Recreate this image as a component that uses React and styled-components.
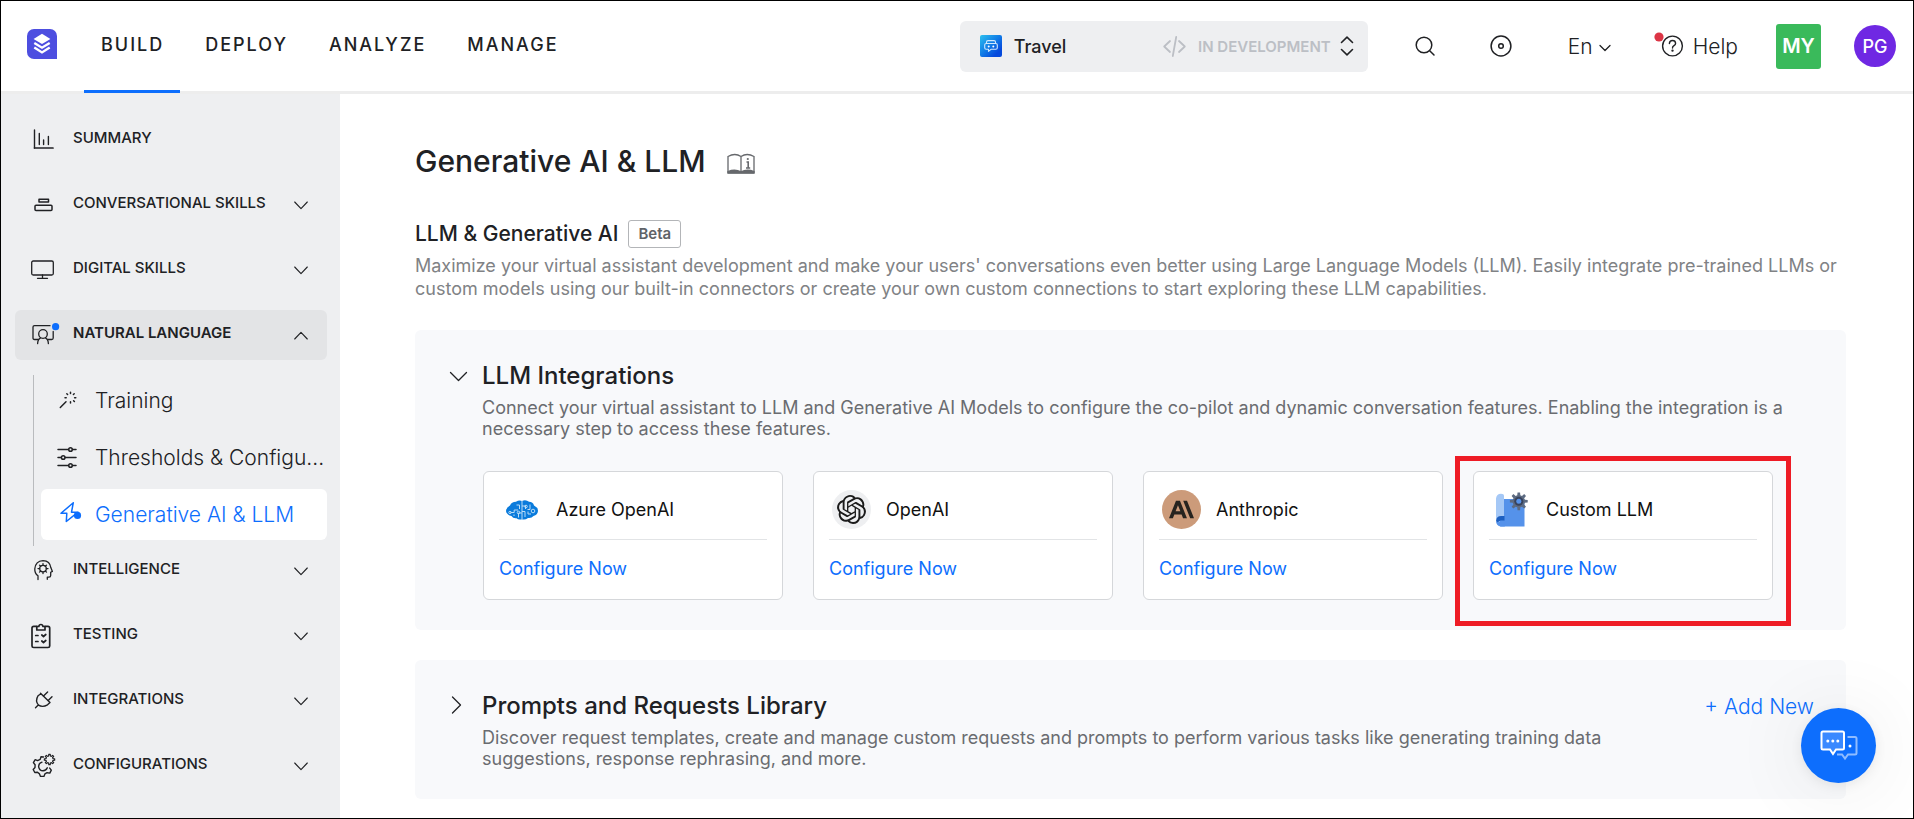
import React from 'react';
import styled, { createGlobalStyle, css } from 'styled-components';
import { SiOpenai, SiAnthropic } from 'react-icons/si';

const ink = '#202124';
const blue = '#0d6efd';
const shade = '#eeeff1';

const GlobalStyle = createGlobalStyle`
  *, *::before, *::after { box-sizing: border-box; }
  body {
    margin: 0;
    background: #fff;
    color: ${ink};
    font-family: Inter, "Liberation Sans", sans-serif;
  }
  h1, h2, h3, p, ul { margin: 0; padding: 0; }
  ul { list-style: none; }
  button, select { font-family: inherit; color: inherit; background: none; border: 0; padding: 0; cursor: pointer; }
  a { color: inherit; text-decoration: none; }
  svg { display: block; flex: none; overflow: visible; }
`;

const Page = styled.div`
  display: flex;
  flex-direction: column;
  min-height: 100vh;
  border: 1px solid #000;
`;

const Header = styled.header`
  display: flex;
  align-items: center;
  height: 93px;
  padding: 0 17px 0 26px;
  border-bottom: 3px solid #ededed;
`;

const Home = styled.a`
  padding-bottom: 5px;
`;

const Tabs = styled.nav`
  display: flex;
  align-self: flex-start;
  gap: 8px;
  margin-left: 27px;
`;

const Tab = styled.a`
  display: flex;
  align-items: center;
  height: 92px;
  padding: 0 16px 2px 17px;
  border-bottom: 3px solid ${(p) => (p.$active ? blue : 'transparent')};
  font-size: 18px;
  font-weight: 500;
  letter-spacing: 2px;
`;

const Tools = styled.div`
  display: flex;
  align-items: center;
  gap: 38px;
  margin-left: auto;
`;

const AppSwitcher = styled.button`
  display: flex;
  align-items: center;
  width: 408px;
  height: 51px;
  padding: 0 14px 0 20px;
  border-radius: 6px;
  background: ${shade};
`;

const AppName = styled.span`
  margin: 0 auto 0 12px;
  font-size: 18px;
  font-weight: 500;
`;

const Stage = styled.span`
  display: flex;
  align-items: center;
  gap: 12px;
  margin-right: 9px;
  color: #bcbfc5;
  font-size: 15px;
  font-weight: 600;
`;

const IconButton = styled.button`
  display: grid;
  place-items: center;
  width: 38px;
  height: 38px;
`;

const Language = styled.label`
  display: flex;
  align-items: center;
  gap: 6px;
  padding: 0 5px 0 10px;
  select {
    appearance: none;
    font-size: 21px;
    font-weight: 300;
  }
`;

const Help = styled.button`
  display: flex;
  align-items: center;
  gap: 9px;
  font-size: 21px;
  font-weight: 300;
`;

const Avatars = styled.div`
  display: flex;
  align-items: center;
  gap: 33px;
`;

const Avatar = styled.button`
  && {
    width: ${(p) => p.$size}px;
    height: ${(p) => p.$size}px;
    border-radius: ${(p) => (p.$round ? '50%' : '3px')};
    background: ${(p) => p.$color};
    color: #fff;
    font-size: ${(p) => (p.$round ? 18 : 20)}px;
    font-weight: ${(p) => (p.$round ? 500 : 600)};
  }
`;

const Columns = styled.div`
  display: flex;
  flex: 1;
`;

const Sidebar = styled.nav`
  flex: none;
  width: 339px;
  padding: 21px 13px 15px 14px;
  background: ${shade};
`;

const Sections = styled.ul`
  display: flex;
  flex-direction: column;
  gap: 15px;
`;

const sectionRow = css`
  display: flex;
  align-items: center;
  width: 100%;
  height: 50px;
  padding: 0 19px 0 14px;
  border-radius: 6px;
`;

const SectionButton = styled.button`
  ${sectionRow}
  background: ${(p) => (p.$open ? '#e3e4e6' : 'none')};
  span { font-weight: ${(p) => (p.$open ? 600 : 500)}; }
`;

const SectionLink = styled.a`
  ${sectionRow}
  span { font-weight: 500; }
`;

const SectionLabel = styled.span`
  flex: 1;
  padding: 0 0 5px 16px;
  font-size: 15px;
  text-align: left;
`;

const SubList = styled.ul`
  display: flex;
  flex-direction: column;
  gap: 6px;
  margin: 15px 0 -15px 18px;
  padding: 0 0 6px 7px;
  border-left: 1px solid #b9bbbe;
`;

const SubItem = styled.a`
  display: flex;
  align-items: center;
  gap: 16px;
  height: 51px;
  padding-left: 14px;
  border-radius: 6px;
  background: ${(p) => (p.$active ? '#fff' : 'none')};
  color: ${(p) => (p.$active ? blue : ink)};
  font-size: 21px;
  font-weight: 300;
  white-space: nowrap;
`;

const Main = styled.main`
  flex: 1;
  min-width: 0;
  padding: 49px 67px 18px 75px;
`;

const TitleRow = styled.div`
  display: flex;
  align-items: center;
  gap: 21px;
`;

const DocsLink = styled.a`
  padding-top: 5px;
`;

const Title = styled.h1`
  font-size: 30px;
  line-height: 36px;
  font-weight: 500;
`;

const SubtitleRow = styled.div`
  display: flex;
  align-items: center;
  gap: 10px;
  margin-top: 41px;
`;

const Subtitle = styled.h2`
  font-size: 21px;
  line-height: 28px;
  font-weight: 500;
`;

const Tag = styled.span`
  padding: 0 9px;
  border: 1px solid #b3b5b8;
  border-radius: 3px;
  color: #5f6368;
  font-size: 15px;
  line-height: 26px;
  font-weight: 600;
`;

const Intro = styled.p`
  margin: 6px 0 30px;
  color: #808285;
  font-size: 18px;
  line-height: 23px;
`;

const Panel = styled.section`
  display: flex;
  margin-bottom: 30px;
  padding: 31px 32px 30px 34px;
  border-radius: 6px;
  background: #f8f9fb;
  &:last-child { margin-bottom: 0; }
`;

const Toggle = styled.button`
  display: grid;
  place-items: center;
  flex: none;
  width: 18px;
  height: 30px;
  margin-right: 15px;
`;

const PanelBody = styled.div`
  flex: 1;
  min-width: 0;
`;

const PanelTitle = styled.h3`
  font-size: 24px;
  line-height: 30px;
  font-weight: 500;
`;

const PanelText = styled.p`
  margin-top: 6px;
  color: #6a6c70;
  font-size: 18px;
  line-height: 21px;
`;

const AddButton = styled.button`
  && { color: ${blue}; }
  flex: none;
  align-self: flex-start;
  margin-left: 40px;
  font-size: 21px;
  line-height: 32px;
  font-weight: 300;
`;

const Cards = styled.ul`
  display: grid;
  grid-template-columns: repeat(auto-fill, 300px);
  gap: 30px;
  && { margin: 32px 0 0 1px; }
`;

const Card = styled.li`
  position: relative;
  height: 129px;
  padding: 12px 15px;
  border: 1px solid #d5d7da;
  border-radius: 6px;
  background: #fff;
`;

const Highlight = styled.div`
  position: absolute;
  inset: -16px -19px -27px;
  border: 5px solid #ee1c25;
  pointer-events: none;
`;

const CardHead = styled.div`
  display: flex;
  align-items: center;
  gap: 15px;
  height: 56px;
  padding: 0 0 4px 3px;
  border-bottom: 1px solid #e2e4e6;
  font-size: 18px;
  color: #111;
`;

const Logo = styled.span`
  display: grid;
  place-items: center;
  width: 39px;
  height: 39px;
  border-radius: 50%;
  background: ${(p) => p.$bg || 'none'};
`;

const CardLink = styled.a`
  display: inline-block;
  margin-top: 17px;
  color: ${blue};
  font-size: 18px;
  line-height: 24px;
`;

const ChatButton = styled.button`
  && {
    position: fixed;
    right: 38px;
    bottom: 36px;
    display: grid;
    place-items: center;
    width: 75px;
    height: 75px;
    border-radius: 50%;
    background: ${blue};
    box-shadow: 0 4px 80px rgba(0, 0, 0, 0.09), 0 3px 14px rgba(0, 0, 0, 0.08);
  }
`;

const Icon = ({ w = 24, h = w, sw = 1.4, children }) => (
  <svg width={w} height={h} viewBox={`0 0 ${w} ${h}`} fill="none" stroke="currentColor" strokeWidth={sw} strokeLinecap="round" strokeLinejoin="round" aria-hidden="true">
    {children}
  </svg>
);

const Chevron = ({ up }) => (
  <Icon w={14} h={9} sw={1.1}>
    <path d={up ? 'M0.7 8 7 1.3 13.3 8' : 'M0.7 1 7 7.7 13.3 1'} />
  </Icon>
);

const gearPath = (cx, cy, teeth, r1, r2) => {
  const pts = [];
  const step = (Math.PI * 2) / teeth;
  for (let i = 0; i < teeth; i += 1) {
    const a = i * step - Math.PI / 2;
    [[-0.32, r1], [-0.18, r2], [0.18, r2], [0.32, r1]].forEach(([o, r]) => {
      pts.push(`${(cx + Math.cos(a + o * step) * r).toFixed(2)} ${(cy + Math.sin(a + o * step) * r).toFixed(2)}`);
    });
  }
  return `M${pts.join('L')}Z`;
};

const BrandLogo = () => (
  <svg width="30" height="30" viewBox="0 0 30 30" aria-hidden="true">
    <path d="M7 0H23a7 7 0 0 1 7 7V30H7a7 7 0 0 1-7-7V7a7 7 0 0 1 7-7Z" fill="#4d4ee0" />
    <path d="M15 4.7 23.4 10 15 15 6.600 10Z" fill="#fff" />
    <g fill="none" stroke="#fff" strokeWidth="2.400">
      <path d="M7.300 13.900 15 18.700 22.700 13.900" />
      <path d="M7.300 18.600 15 23.400 22.700 18.600" />
    </g>
  </svg>
);

const TravelIcon = () => (
  <svg width="22" height="22" viewBox="0 0 22 22" aria-hidden="true">
    <defs>
      <linearGradient id="travel" x1="0" y1="0" x2="1" y2="1">
        <stop offset="0" stopColor="#2cc0ee" />
        <stop offset="0.500" stopColor="#0f78e6" />
        <stop offset="0.800" stopColor="#0549dc" />
      </linearGradient>
    </defs>
    <rect width="22" height="22" rx="2" fill="url(#travel)" />
    <g fill="none" stroke="#cfe8fd" strokeWidth="1.100" strokeLinejoin="round">
      <path d="M6.500 8.500V7q0-1.400 1.500-1.400h6q1.500 0 1.500 1.400v1.500" />
      <path d="M6.200 8.500h9.600q1.500 0 1.500 1.500v2.800q0 1.500-1.500 1.500H11l-2.500 2.100v-2.100H6.200q-1.500 0-1.500-1.500V10q0-1.500 1.500-1.500Z" />
    </g>
    <circle cx="8.700" cy="11.400" r="1" fill="#fff" />
    <circle cx="13.300" cy="11.400" r="1" fill="#fff" />
  </svg>
);

const CodeIcon = () => (
  <Icon w={23} h={21} sw={1.8}>
    <path d="M7 5 1.200 10.500 7 16M16 5l5.800 5.500L16 16M13.200 1 9.800 20" />
  </Icon>
);

const SummaryIcon = () => (
  <Icon w={28} h={24} sw={1.4}>
    <path d="M5.500 2V20M10.300 5.500v11M14.600 12v4.500M19.400 8.500v8" />
    <path d="M5.500 20H24" strokeWidth="1.700" />
  </Icon>
);

const SkillsIcon = () => (
  <Icon w={28} h={24} sw={1.5}>
    <rect x="10" y="6.200" width="9.500" height="2.800" />
    <rect x="6" y="12.200" width="17" height="5.300" rx="1" />
  </Icon>
);

const MonitorIcon = () => (
  <Icon w={28} h={24} sw={1.3}>
    <rect x="2.700" y="3" width="21.600" height="14" rx="1.500" />
    <path d="M13.500 17v3M8.500 20.300h10" />
  </Icon>
);

const LanguageIcon = () => (
  <Icon w={28} h={24} sw={1.3}>
    <path d="M9.500 16.500H5.500q-1.500 0-1.500-1.500V4q0-1.300 1.500-1.300H21M24.200 8.500V15q0 1.500-1.500 1.500H18.500" />
    <circle cx="14" cy="11" r="4.300" />
    <path d="M8.600 20.600q.3-4.500 3-5.700M19.400 20.600q-.3-4.500-3-5.700" />
    <circle cx="26.600" cy="3.700" r="3.600" fill={blue} stroke="none" />
  </Icon>
);

const HeadGearIcon = () => (
  <Icon w={28} h={24} sw={1.3}>
    <path d="M9 20.500v-3.700q-3.500-2.400-3.200-7Q6.500 2 14 1.600q7 .2 7.900 7.200l1.500 3.600-1.700.9v3.200q0 1.600-1.800 1.600h-1.600v2.200" />
    <circle cx="14" cy="9.600" r="3.300" />
    <path d="M14 4.600v1.700M14 12.900v1.700M9 9.600h1.700M17.300 9.600H19M10.500 6.100l1.200 1.200M16.300 11.900l1.200 1.200M17.500 6.100l-1.200 1.200M11.700 11.900l-1.200 1.200" />
  </Icon>
);

const ClipboardIcon = () => (
  <Icon w={28} h={26} sw={1.7}>
    <path d="M7.800 3.300H4.800Q3 3.300 3 5v18q0 1.500 1.700 1.500H19q1.700 0 1.700-1.500V5q0-1.700-1.700-1.700h-3" />
    <path d="M7.800 7V3.500h2q.3-2 2.100-2t2.100 2h2V7Z" />
    <path d="M6.700 12.500h2.300M6.700 18.500h2.300M12.800 12l1.700 1.500 2.300-2M12.800 18l1.700 1.500 2.300-2" />
  </Icon>
);

const PlugIcon = () => (
  <Icon w={28} h={24} sw={1.4}>
    <path d="M6.500 18.800 9 16.300M11.500 4.200 21 13.500l-2.500 2.300q-5 3-9 .3-3.600-4.300-.5-9.300L12 4.700" />
    <path d="M14.500 7 18.600 3M19.200 11.500 23 7.700" />
  </Icon>
);

const GearsIcon = () => (
  <Icon w={28} h={24} sw={1.4}>
    <path d="M14.500 3 12 2.700l-.8 2.700-2.600 1.200-2.400-1-1.800 3 1.700 2.200-.1 2.700-1.800 2 1.600 3 2.700-.2 2 1.600 1 2.500h3.400l1-2.500 2.200-1.200 2.700.4 1.500-3-1.600-2" />
    <path d="M13 8.100q-3.800 1.200-3.300 5 .8 3.600 4.300 3.700 3.200-.2 4.300-3" />
    <path d={gearPath(20.5, 5.5, 8, 3.6, 5.2)} strokeWidth="1.200" />
  </Icon>
);

const WandIcon = () => (
  <Icon w={24} h={24} sw={1.5}>
    <path d="M5.300 18.500 11 12.800" />
    <path d="M15.500 3.300v1.200M15.500 12.800v1.200M10 8.700h1.200M19.600 8.700h1.200M11.800 4.700l.8.800M18.600 11.700l.8.800M19.200 4.700l-.8.800" />
  </Icon>
);

const SlidersIcon = () => (
  <Icon w={24} h={24} sw={1.5}>
    <path d="M3 3.500h10.500M17.500 3.500H21M3 11.500h3.200M10.200 11.500H21M3 19.500h10.500M17.500 19.500H21" />
    <circle cx="15.500" cy="3.500" r="1.800" />
    <circle cx="8.200" cy="11.500" r="1.800" />
    <circle cx="15.500" cy="19.500" r="1.800" />
  </Icon>
);

const SparkIcon = () => (
  <Icon w={24} h={24} sw={1.5}>
    <path d="M18.300-.3 6 10.300h5.800L11.300 18.500 23 9.200h-6.500Z" />
    <circle cx="22.500" cy="12.400" r="3.600" fill={blue} stroke="none" />
  </Icon>
);

const BookIcon = () => (
  <svg width="28" height="22" viewBox="0 0 28 22" fill="none" stroke="#66686c" strokeWidth="1.300" aria-hidden="true">
    <path d="M14 3.500Q8-.5 1 3.500V19.700H27V3.500Q20-.5 14 3.500V19" />
    <path d="M1 18.500q7-2.600 13 .3 6-2.900 13-.3v1.700H1Z" fill="#66686c" />
    <path d="M19.500 9h1.700v6M19 15h4.200" strokeWidth="1.600" />
    <circle cx="20.800" cy="6" r="1.100" fill="#66686c" stroke="none" />
  </svg>
);

const AzureLogo = () => (
  <svg width="32" height="20" viewBox="0 0 32 20" aria-hidden="true">
    <path d="M10 1.800Q13-.4 16 .9q4-1.600 7 .9 4 .2 5 3.600 4 2 4 5.600-.4 4-4.500 5-2 2.500-5.500 2-3 2.300-6 1.300-3.500 1-5.500-1.100-3.500.4-5-2.200Q.3 14.500 0 11q.2-3.700 4-5.600 1.500-3.500 6-3.600Z" fill="#0a7bdc" />
    <g fill="none" stroke="#b9dcf7" strokeWidth="1">
      <path d="M16 1v18M4.500 12.500h3.700V10H12M10.500 5h3v4M12.500 17.500V13h3.300M19 17v-5.500h-3M16 6h3.500v3M24 4.500v5h-2.500M25 14h-3v-2.500M8 16v-1.500" />
      <circle cx="4" cy="12.500" r="1.200" />
      <circle cx="12.500" cy="12.500" r="1.300" />
      <circle cx="20" cy="6.500" r="1.300" />
      <circle cx="27" cy="11" r="1.800" />
    </g>
  </svg>
);

const CustomLogo = () => (
  <svg width="33" height="36" viewBox="0 0 33 36" aria-hidden="true">
    <path d="M8 7H29.500V34.500H5Z" fill="#5592ea" />
    <path d="M1 6.500Q1.500 1.800 6 1.800 9 1.800 9 4V24.500H4.500L1 28Z" fill="#a5c8f6" />
    <path d="M1 29Q1.500 24 6 24h3.500v5H5.500Q3 29 3 32Z" fill="#1d5fc0" />
    <path d="M1 28.500Q2.500 32 5.500 28.600h4.300V34.500H6Q1 34 1 28.500Z" fill="#5592ea" />
    <path d={gearPath(23.8, 9.3, 8, 6.2, 9)} fill="#5d6b82" />
    <circle cx="23.800" cy="9.300" r="4.500" fill="#38435c" />
    <circle cx="23.800" cy="9.300" r="2.500" fill="#5592ea" />
  </svg>
);

const ChatIcon = () => (
  <svg width="38" height="32" viewBox="0 0 38 32" fill="none" strokeWidth="2" aria-hidden="true">
    <path d="M27.500 7h7.500q1.500 0 1.500 1.500v14.500q0 1.500-1.500 1.500h-7l-3 4-3-4h-5" stroke="#8fbcff" />
    <path d="M3 1.500h19.500Q24 1.500 24 3v15q0 1.500-1.500 1.500H16l-3 4.500-3-4.500H3Q1.500 19.500 1.500 18V3Q1.500 1.500 3 1.500Z" fill="#3a89ff" stroke="#fff" />
    <g fill="#fff">
      <circle cx="7.800" cy="11" r="1.500" />
      <circle cx="12.800" cy="11" r="1.500" />
      <circle cx="17.800" cy="11" r="1.500" />
      <circle cx="30" cy="16" r="1.500" />
    </g>
  </svg>
);

const sectionsTop = [
  ['CONVERSATIONAL SKILLS', SkillsIcon],
  ['DIGITAL SKILLS', MonitorIcon],
];

const sectionsBottom = [
  ['INTELLIGENCE', HeadGearIcon],
  ['TESTING', ClipboardIcon],
  ['INTEGRATIONS', PlugIcon],
  ['CONFIGURATIONS', GearsIcon],
];

const subItems = [
  ['Training', WandIcon],
  ['Thresholds & Configu...', SlidersIcon],
  ['Generative AI & LLM', SparkIcon],
];

const models = [
  { name: 'Azure OpenAI', logo: <AzureLogo /> },
  { name: 'OpenAI', logo: <SiOpenai size={29} color="#1b1b1b" />, bg: '#eeeff1' },
  { name: 'Anthropic', logo: <SiAnthropic size={25} color="#26231f" />, bg: '#cc9b7a' },
  { name: 'Custom LLM', logo: <CustomLogo />, highlighted: true },
];

const Section = ({ label, Glyph, open, children }) => (
  <li>
    <SectionButton type="button" $open={open} aria-expanded={!!open}>
      <Glyph />
      <SectionLabel>{label}</SectionLabel>
      <Chevron up={open} />
    </SectionButton>
    {children}
  </li>
);

export default function App() {
  return (
    <Page>
      <GlobalStyle />
      <Header>
        <Home href="#home" aria-label="Home"><BrandLogo /></Home>
        <Tabs>
          {['BUILD', 'DEPLOY', 'ANALYZE', 'MANAGE'].map((t) => (
            <Tab key={t} href={`#${t.toLowerCase()}`} $active={t === 'BUILD'}>{t}</Tab>
          ))}
        </Tabs>
        <Tools>
          <AppSwitcher type="button">
            <TravelIcon />
            <AppName>Travel</AppName>
            <Stage><CodeIcon />IN DEVELOPMENT</Stage>
            <Icon w={14} h={20} sw={1.6}>
              <path d="M1.500 6.500 7 1.200l5.500 5.300M1.500 13.500 7 18.800l5.500-5.300" />
            </Icon>
          </AppSwitcher>
          <IconButton type="button" aria-label="Search">
            <Icon w={20} h={20} sw={1.5}>
              <circle cx="9" cy="9" r="7.800" />
              <path d="m14.700 14.700 4.300 4.300" />
            </Icon>
          </IconButton>
          <IconButton type="button" aria-label="Preview">
            <Icon w={22} h={22} sw={1.5}>
              <circle cx="11" cy="11" r="9.900" />
              <circle cx="11" cy="11" r="2.300" />
            </Icon>
          </IconButton>
          <Language>
            <select aria-label="Language" defaultValue="En"><option>En</option></select>
            <Icon w={12} h={4} sw={1.3}><path d="M1 1.500l5 5 5-5" /></Icon>
          </Language>
          <Help type="button">
            <Icon w={30} h={28} sw={1.4}>
              <circle cx="18.500" cy="14" r="9.900" />
              <circle cx="5" cy="5" r="4.600" fill="#dc3545" stroke="none" />
              <path d="M15.400 11.500q.2-3 3.100-3t3.100 2.700q0 1.400-1.600 2.400t-1.500 2.400" />
              <circle cx="18.500" cy="18.600" r="0.500" fill="currentColor" />
            </Icon>
            Help
          </Help>
          <Avatars>
            <Avatar type="button" $size={45} $color="#3aba5b">MY</Avatar>
            <Avatar type="button" $size={42} $color="#6f28e3" $round>PG</Avatar>
          </Avatars>
        </Tools>
      </Header>

      <Columns>
        <Sidebar>
          <Sections>
            <li>
              <SectionLink href="#summary">
                <SummaryIcon />
                <SectionLabel>SUMMARY</SectionLabel>
              </SectionLink>
            </li>
            {sectionsTop.map(([label, Glyph]) => <Section key={label} label={label} Glyph={Glyph} />)}
            <Section label="NATURAL LANGUAGE" Glyph={LanguageIcon} open>
              <SubList>
                {subItems.map(([label, Glyph], i) => (
                  <li key={label}>
                    <SubItem href={`#item-${i + 1}`} $active={i === 2}>
                      <Glyph />
                      <span>{label}</span>
                    </SubItem>
                  </li>
                ))}
              </SubList>
            </Section>
            {sectionsBottom.map(([label, Glyph]) => <Section key={label} label={label} Glyph={Glyph} />)}
          </Sections>
        </Sidebar>

        <Main>
          <TitleRow>
            <Title>Generative AI &amp; LLM</Title>
            <DocsLink href="#docs" aria-label="Documentation"><BookIcon /></DocsLink>
          </TitleRow>
          <SubtitleRow>
            <Subtitle>LLM &amp; Generative AI</Subtitle>
            <Tag>Beta</Tag>
          </SubtitleRow>
          <Intro>
            Maximize your virtual assistant development and make your users' conversations even better using Large
            Language Models (LLM). Easily integrate pre-trained LLMs or custom models using our built-in connectors or
            create your own custom connections to start exploring these LLM capabilities.
          </Intro>

          <Panel>
            <Toggle type="button" aria-label="Collapse LLM Integrations" aria-expanded="true">
              <Icon w={18} h={11} sw={1.3}><path d="M1.500 1.500 9.500 9.500 17.500 1.500" /></Icon>
            </Toggle>
            <PanelBody>
              <PanelTitle>LLM Integrations</PanelTitle>
              <PanelText>
                Connect your virtual assistant to LLM and Generative AI Models to configure the co-pilot and dynamic
                conversation features. Enabling the integration is a necessary step to access these features.
              </PanelText>
              <Cards>
                {models.map((m) => (
                  <Card key={m.name}>
                    <CardHead>
                      <Logo $bg={m.bg}>{m.logo}</Logo>
                      {m.name}
                    </CardHead>
                    <CardLink href="#configure">Configure Now</CardLink>
                    {m.highlighted && <Highlight />}
                  </Card>
                ))}
              </Cards>
            </PanelBody>
          </Panel>

          <Panel>
            <Toggle type="button" aria-label="Expand Prompts and Requests Library" aria-expanded="false">
              <Icon w={14} h={20} sw={1.3}><path d="M1.500 1 9.500 9 1.500 17" /></Icon>
            </Toggle>
            <PanelBody>
              <PanelTitle>Prompts and Requests Library</PanelTitle>
              <PanelText>
                Discover request templates, create and manage custom requests and prompts to perform various tasks like
                generating training data suggestions, response rephrasing, and more.
              </PanelText>
            </PanelBody>
            <AddButton type="button">+ Add New</AddButton>
          </Panel>
        </Main>
      </Columns>

      <ChatButton type="button" aria-label="Open chat"><ChatIcon /></ChatButton>
    </Page>
  );
}
